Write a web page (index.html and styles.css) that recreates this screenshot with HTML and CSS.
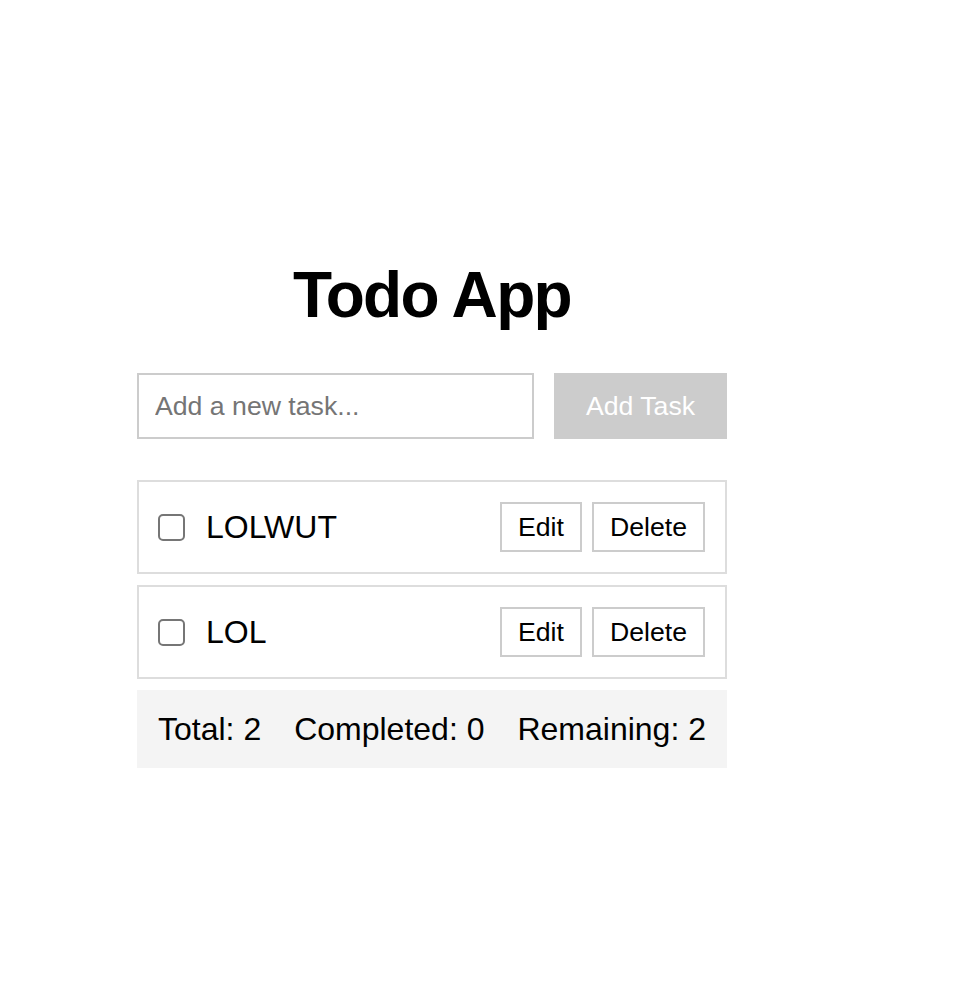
FILE: index.html
```html
<!DOCTYPE html>
<html lang="en">
<head>
<meta charset="utf-8">
<title>Todo App</title>
<link rel="stylesheet" href="styles.css">
</head>
<body>
<div class="page">
  <main class="app">
    <h1 class="title">Todo App</h1>
    <form class="add-row">
      <input class="add-input" type="text" placeholder="Add a new task...">
      <button class="add-btn" type="button">Add Task</button>
    </form>
    <ul class="list">
      <li class="item">
        <input class="check" type="checkbox">
        <span class="item-text">LOLWUT</span>
        <div class="actions">
          <button class="btn" type="button">Edit</button>
          <button class="btn" type="button">Delete</button>
        </div>
      </li>
      <li class="item">
        <input class="check" type="checkbox">
        <span class="item-text">LOL</span>
        <div class="actions">
          <button class="btn" type="button">Edit</button>
          <button class="btn" type="button">Delete</button>
        </div>
      </li>
    </ul>
    <div class="stats">
      <span>Total: 2</span>
      <span>Completed: 0</span>
      <span>Remaining: 2</span>
    </div>
  </main>
</div>
</body>
</html>
```
FILE: styles.css
```css
* { box-sizing: border-box; }
html, body { margin: 0; padding: 0; background: #fff; }
body {
  font-family: "Liberation Sans", Arial, sans-serif;
  color: #000;
}
.page {
  padding: 259px 0 0 137px;
}
.app {
  width: 590px;
}
.title {
  margin: 0 0 42px;
  font-size: 64px;
  line-height: 72px;
  font-weight: 700;
  text-align: center;
  letter-spacing: -1.7px;
}
.add-row {
  display: flex;
  gap: 20px;
  margin: 0 0 41px;
}
.add-input {
  width: 397px;
  height: 66px;
  border: 2px solid #ccc;
  padding: 0 16px;
  font-family: "Liberation Sans", Arial, sans-serif;
  font-size: 26.67px;
  color: #000;
  outline: none;
}
.add-input::placeholder { color: #757575; }
.add-btn {
  flex: 1;
  height: 66px;
  border: none;
  background: #ccc;
  color: #fff;
  font-family: "Liberation Sans", Arial, sans-serif;
  font-size: 26.67px;
  padding: 0;
}
.list {
  list-style: none;
  margin: 0;
  padding: 0;
  display: flex;
  flex-direction: column;
  gap: 11px;
}
.item {
  display: flex;
  align-items: center;
  height: 94px;
  border: 2px solid #ddd;
  padding: 0 20px 0 19px;
}
.check {
  appearance: none;
  -webkit-appearance: none;
  margin: 0;
  width: 27px;
  height: 27px;
  border: 2px solid #767676;
  border-radius: 5px;
  background: #fff;
  flex: none;
}
.item-text {
  margin-left: 21px;
  font-size: 32px;
  flex: 1;
}
.actions {
  display: flex;
  gap: 10px;
}
.btn {
  height: 50px;
  border: 2px solid #ccc;
  background: #fff;
  padding: 0 16px;
  font-family: "Liberation Sans", Arial, sans-serif;
  font-size: 26.67px;
  color: #000;
}
.stats {
  margin-top: 11px;
  background: #f4f4f4;
  height: 78px;
  padding: 0 21px;
  display: flex;
  align-items: center;
  justify-content: space-between;
  font-size: 32px;
}
```
